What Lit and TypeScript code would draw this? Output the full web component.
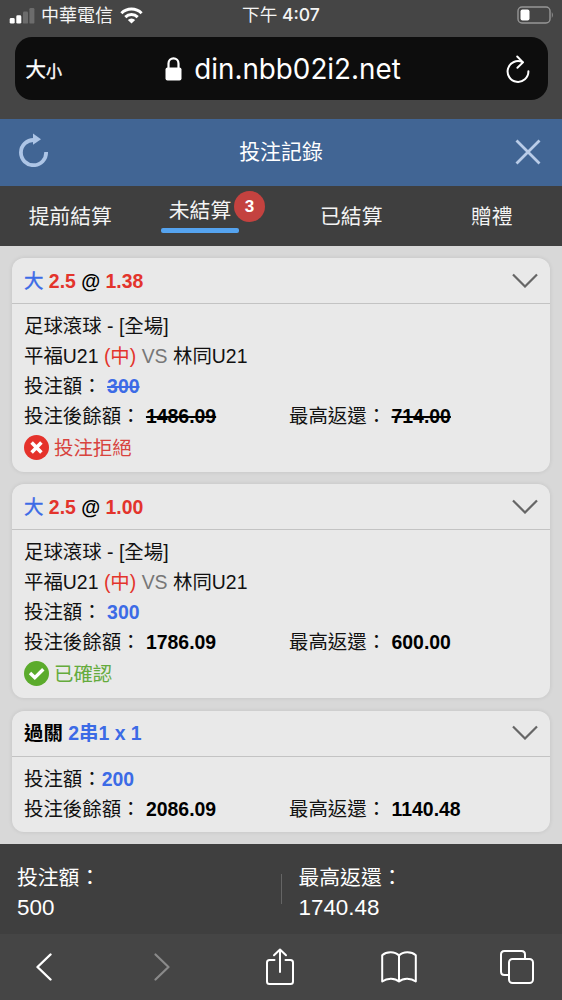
import { LitElement, html, css, nothing } from "lit";
import { customElement, property } from "lit/decorators.js";

interface Bet {
  kind: "single" | "parlay";
  odds?: string;
  stake: string;
  balance: string;
  payout: string;
  status?: "rejected" | "confirmed";
}

const BETS: Bet[] = [
  { kind: "single", odds: "1.38", stake: "300", balance: "1486.09", payout: "714.00", status: "rejected" },
  { kind: "single", odds: "1.00", stake: "300", balance: "1786.09", payout: "600.00", status: "confirmed" },
  { kind: "parlay", stake: "200", balance: "2086.09", payout: "1140.48" },
];

@customElement("bet-card")
export class BetCard extends LitElement {
  @property({ attribute: false }) bet!: Bet;

  static styles = css`
    :host { display: block; background: #e9e9e9; border-radius: 12px; box-shadow: 0 0 4px rgba(0, 0, 0, 0.1); font-size: 19.43px; color: #111; }
    .head { height: 45px; box-sizing: border-box; padding: 0 12px 3px; display: flex; align-items: center; justify-content: space-between; font-weight: 700; color: #000; }
    .head span { white-space: pre; }
    .head svg { margin-top: 1px; }
    .rule { height: 1px; background: #c3c3c3; }
    .body { padding: 7px 12px 8px; }
    .row { height: 30px; line-height: 30px; display: flex; white-space: pre; }
    .left { width: 265px; }
    .thin { font-weight: 400; -webkit-text-stroke: 0.4px currentColor; }
    .blue { color: #3c6be6; }
    .red { color: #e3342c; }
    .vs { color: #777; }
    .num { font-weight: 700; color: #000; }
    .num.blue { color: #3c6be6; }
    .struck { text-decoration: line-through; text-decoration-thickness: 1.5px; }
    .status { height: 33px; display: flex; align-items: center; gap: 5px; }
    .status span { padding-bottom: 2px; }
    .rejected { color: #d8433e; }
    .confirmed { color: #64ab3c; }
    svg { display: block; flex: none; }
  `;

  render() {
    const b = this.bet;
    const struck = b.status === "rejected" ? "struck" : "";
    const single = b.kind === "single";
    return html`
      <div class="head">
        ${single
          ? html`<span><span class="blue thin">大</span> <span class="red">2.5</span> @ <span class="red">${b.odds}</span></span>`
          : html`<span>過關 <span class="blue">2串1 x 1</span></span>`}
        <svg width="26" height="16" viewBox="0 0 26 16" fill="none" stroke="#666" stroke-width="2.2"><path d="M1 2.5 L13 14.5 L25 2.5" /></svg>
      </div>
      <div class="rule"></div>
      <div class="body">
        ${single
          ? html`<div class="row">足球滾球 - [全場]</div>
              <div class="row"><span>平福U21 <span class="red">(中)</span> <span class="vs">VS</span> 林同U21</span></div>`
          : nothing}
        <div class="row"><span>投注額：${single ? " " : ""}<span class="num blue ${struck}">${b.stake}</span></span></div>
        <div class="row">
          <span class="left">投注後餘額： <span class="num ${struck}">${b.balance}</span></span><span>最高返還： <span class="num ${struck}">${b.payout}</span></span>
        </div>
        ${b.status === "rejected"
          ? html`<div class="status rejected">
              <svg width="25" height="25" viewBox="0 0 25 25"><circle cx="12.5" cy="12.5" r="12.5" fill="#e5322b" /><path d="M7.6 7.6 L17.4 17.4 M17.4 7.6 L7.6 17.4" stroke="#fff" stroke-width="3.6" /></svg>
              <span>投注拒絕</span>
            </div>`
          : nothing}
        ${b.status === "confirmed"
          ? html`<div class="status confirmed">
              <svg width="25" height="25" viewBox="0 0 25 25"><circle cx="12.5" cy="12.5" r="12.5" fill="#5bab2c" /><path d="M6 12 L10.8 16.6 L19.3 8.2" fill="none" stroke="#fff" stroke-width="3.4" /></svg>
              <span>已確認</span>
            </div>`
          : nothing}
      </div>
    `;
  }
}

@customElement("app-root")
export class AppRoot extends LitElement {
  static styles = css`
    :host { display: flex; flex-direction: column; width: 562px; height: 1000px; overflow: hidden; font-family: "Liberation Sans", "Noto Sans CJK TC", sans-serif; background: #454545; }
    svg { display: block; flex: none; }
    .statusbar { height: 37px; display: grid; grid-template-columns: 1fr auto 1fr; align-items: center; box-sizing: border-box; padding: 0 8px 7px 9px; color: #f4f4f4; font-family: Inter, "Noto Sans CJK TC", sans-serif; font-size: 18px; line-height: 24px; }
    .carrier { display: flex; align-items: center; gap: 6px; padding-top: 1px; }
    .carrier .wifi { margin-left: 1px; }
    .clock { font-size: 17.6px; font-weight: 500; margin-right: 1px; }
    .clock .cjk { font-weight: 400; }
    .battery { justify-self: end; }
    .urlbar { height: 63px; margin: 0 14.5px 19px; box-sizing: border-box; border-radius: 17px; background: #0d0d0d; color: #fff; display: grid; grid-template-columns: 1fr auto 1fr; align-items: center; padding: 1px 18px 0 11px; font-family: Inter, "Noto Sans CJK TC", sans-serif; }
    .aa { font-size: 20.5px; font-weight: 400; line-height: 30px; -webkit-text-stroke: 0.4px currentColor; padding-top: 2px; }
    .aa small { font-size: 16px; }
    .address { display: flex; align-items: center; gap: 12px; font-size: 27.8px; line-height: 34px; margin-left: 11px; }
    .address span { padding-bottom: 1px; }
    .reload { justify-self: end; }
    .title { height: 67px; box-sizing: border-box; padding: 0 21px 2px 19px; background: #416594; display: flex; align-items: center; justify-content: space-between; color: #fff; font-size: 20.9px; }
    .title .refresh { margin-bottom: 3px; }
    .title span { padding-bottom: 4px; margin-right: 2px; }
    .tabs { height: 60px; background: #3f3f3f; color: #f4f4f4; display: flex; font-size: 20.8px; line-height: 30px; }
    .tab { width: 140.5px; box-sizing: border-box; display: flex; justify-content: center; align-items: center; padding-top: 2px; }
    .active { position: relative; align-items: flex-start; justify-content: flex-start; padding: 10px 0 0 20.5px; }
    .bar { width: 78px; height: 5px; border-radius: 2px; background: #55a3ef; }
    .stack { display: flex; flex-direction: column; align-items: center; }
    .stack .text { height: 32px; }
    .badge { position: absolute; left: 93.5px; top: 5px; width: 31px; height: 31px; border-radius: 50%; background: #c4423f; color: #fff; font-size: 17px; font-weight: 700; line-height: 31px; text-align: center; }
    .list { height: 598px; box-sizing: border-box; background: #d8d8d8; padding: 12px 12px 0; display: flex; flex-direction: column; gap: 12.4px; }
    .summary { height: 90px; background: #3f3f3f; color: #fff; display: flex; align-items: center; font-size: 20.8px; line-height: 31px; }
    .summary div { flex: 1; padding-left: 17px; padding-top: 7px; }
    .summary .sep { flex: none; width: 1px; height: 30px; padding: 0; background: #656565; }
    .summary b { display: block; font-weight: 400; font-size: 22.4px; line-height: 30px; padding-bottom: 1px; }
    .toolbar { height: 66px; display: flex; align-items: center; justify-content: space-between; padding: 0 27px 0 26px; }
    .toolbar span { width: 36px; display: flex; justify-content: center; }
    .toolbar .share { padding-right: 2px; }
  `;

  render() {
    return html`
      <div class="statusbar">
        <div class="carrier">
          <svg width="26" height="17" viewBox="0 0 26 17"><rect x="0.7" y="11" width="5" height="5.6" rx="1.4" fill="#fff" /><rect x="7.3" y="8.3" width="5" height="8.3" rx="1.4" fill="#fff" /><rect x="14" y="4.5" width="5" height="12.1" rx="1.2" fill="#6c6c6c" /><rect x="20.4" y="1" width="5" height="15.6" rx="1.2" fill="#6c6c6c" /></svg>
          <span>中華電信</span>
          <svg class="wifi" width="23" height="17" viewBox="0 0 23 17" fill="none" stroke="#fff" stroke-width="3"><path d="M1.4 6.2 A14.4 14.4 0 0 1 21.6 6.2" /><path d="M5.3 10.1 A8.9 8.9 0 0 1 17.7 10.1" /><path d="M11.5 16.6 L7.8 12.9 A5.3 5.3 0 0 1 15.2 12.9 Z" fill="#fff" stroke="none" /></svg>
        </div>
        <div class="clock"><span class="cjk">下午</span> 4:07</div>
        <svg class="battery" width="37" height="18" viewBox="0 0 37 18"><rect x="1" y="1" width="32" height="16" rx="4" fill="none" stroke="#969696" stroke-width="1.4" /><rect x="3.5" y="3.5" width="9" height="11" rx="2" fill="#fff" /><path d="M34.8 6 Q36.8 9 34.8 12 Z" fill="#969696" /></svg>
      </div>

      <div class="urlbar">
        <div class="aa">大<small>小</small></div>
        <div class="address">
          <svg width="17" height="24" viewBox="0 0 17 24"><rect x="0.5" y="10.5" width="16" height="13" rx="2" fill="#fff" /><path d="M3.5 11 V6.4 A5 5 0 0 1 13.5 6.4 V11" fill="none" stroke="#fff" stroke-width="2.2" /></svg>
          <span>din.nbb02i2.net</span>
        </div>
        <svg class="reload" width="25" height="28" viewBox="0 0 25 28" fill="none" stroke="#fff" stroke-width="2" stroke-linecap="round"><path d="M17.5 7.1 A10.4 10.4 0 1 0 23.4 16.3" /><path d="M12.2 1.5 L18 7.4 L12.4 12.8" stroke-linejoin="round" /></svg>
      </div>

      <div class="title">
        <svg class="refresh" width="30" height="34" viewBox="0 0 30 34"><path d="M15 7 A12.6 12.6 0 1 0 27.1 19" fill="none" stroke="#adc5e6" stroke-width="3.8" /><path d="M14 0.5 L22 6.2 L14 11.8 Z" fill="#adc5e6" /></svg>
        <span>投注記錄</span>
        <svg width="26" height="26" viewBox="0 0 26 26" stroke="#b9cce8" stroke-width="2.8"><path d="M1.5 1.5 L24.5 24.5 M24.5 1.5 L1.5 24.5" /></svg>
      </div>

      <div class="tabs">
        <div class="tab">提前結算</div>
        <div class="tab active">
          <div class="stack"><span class="text">未結算</span><span class="bar"></span></div>
          <span class="badge">3</span>
        </div>
        <div class="tab">已結算</div>
        <div class="tab">贈禮</div>
      </div>

      <div class="list">${BETS.map((bet) => html`<bet-card .bet=${bet}></bet-card>`)}</div>

      <div class="summary">
        <div>投注額：<b>500</b></div>
        <div class="sep"></div>
        <div>最高返還：<b>1740.48</b></div>
      </div>

      <div class="toolbar">
        <span><svg width="16" height="28" viewBox="0 0 16 28" fill="none" stroke="#fff" stroke-width="2.4" stroke-linecap="round" stroke-linejoin="round"><path d="M14.5 1.5 L1.5 14 L14.5 26.5" /></svg></span>
        <span><svg width="16" height="28" viewBox="0 0 16 28" fill="none" stroke="#8a8a8a" stroke-width="2.2" stroke-linecap="round" stroke-linejoin="round"><path d="M1.5 1.5 L14.5 14 L1.5 26.5" /></svg></span>
        <span class="share"><svg width="30" height="38" viewBox="0 0 30 38" fill="none" stroke="#fff" stroke-width="2" stroke-linecap="round" stroke-linejoin="round"><path d="M9.5 12 H4.5 Q2 12 2 14.5 V33.5 Q2 36 4.5 36 H25.5 Q28 36 28 33.5 V14.5 Q28 12 25.5 12 H20.5" /><path d="M15 24 V1.5 M9 7.3 L15 1.5 L21 7.3" /></svg></span>
        <span><svg width="36" height="32" viewBox="0 0 36 32" fill="none" stroke="#fff" stroke-width="2" stroke-linejoin="round"><path d="M18 4.5 C14 0.3 5.5 0.3 1.2 4.2 V30.5 C6 27 13.5 26.5 18 30.5 C22.5 26.5 30 27 34.8 30.5 V4.2 C30.5 0.3 22 0.3 18 4.5 V30" /></svg></span>
        <span><svg width="34" height="34" viewBox="0 0 34 34" fill="none" stroke="#fff" stroke-width="2"><rect x="9" y="9" width="24" height="24" rx="3.5" /><path d="M9 25 H4.5 Q1 25 1 21.5 V4.5 Q1 1 4.5 1 H21.5 Q25 1 25 4.5 V9" /></svg></span>
      </div>
    `;
  }
}
